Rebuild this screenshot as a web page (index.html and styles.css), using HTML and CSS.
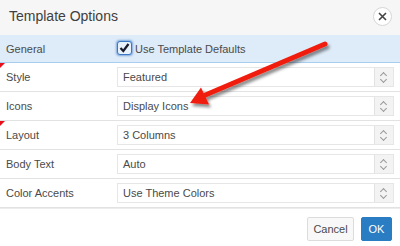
FILE: index.html
```html
<!DOCTYPE html>
<html lang="en">
<head>
    <meta charset="UTF-8">
    <title>Template Options</title>
    <link rel="stylesheet" href="styles.css">
</head>
<body>
    <div class="dialog">
        <div class="dialog-header">
            <h2>Template Options</h2>
            <span class="close-btn">
                <svg width="9" height="9" viewBox="0 0 9 9"><path d="M1 1L8 8M8 1L1 8" stroke="#444" stroke-width="1.6"/></svg>
            </span>
        </div>

        <div class="row general">
            <div class="row-label">General</div>
            <label class="check">
                <span class="check-box">
                    <svg width="11" height="10" viewBox="0 0 11 10"><path d="M1.5 5L4.3 8L9.5 1" fill="none" stroke="#1a1a2a" stroke-width="2.2"/></svg>
                </span>
                Use Template Defaults
            </label>
        </div>
        <div class="row changed">
            <div class="row-label">Style</div>
            <div class="select"><span>Featured</span><span class="spin"></span></div>
        </div>
        <div class="row">
            <div class="row-label">Icons</div>
            <div class="select"><span>Display Icons</span><span class="spin"></span></div>
        </div>
        <div class="row changed">
            <div class="row-label">Layout</div>
            <div class="select"><span>3 Columns</span><span class="spin"></span></div>
        </div>
        <div class="row">
            <div class="row-label">Body Text</div>
            <div class="select"><span>Auto</span><span class="spin"></span></div>
        </div>
        <div class="row">
            <div class="row-label">Color Accents</div>
            <div class="select"><span>Use Theme Colors</span><span class="spin"></span></div>
        </div>

        <div class="dialog-footer">
            <button class="btn btn-cancel">Cancel</button>
            <button class="btn btn-primary">OK</button>
        </div>

        <!-- annotation arrow -->
        <svg class="arrow" width="400" height="246" viewBox="0 0 400 246">
            <defs>
                <filter id="shadow" x="-20%" y="-20%" width="140%" height="160%">
                    <feDropShadow dx="2" dy="3" stdDeviation="1.6" flood-color="#000" flood-opacity="0.45"/>
                </filter>
            </defs>
            <g filter="url(#shadow)" fill="#f01c0c">
                <path d="M325 44L203 96" stroke="#f01c0c" stroke-width="5" stroke-linecap="round"/>
                <polygon points="190,103 209,104.5 201,87.5"/>
            </g>
        </svg>
    </div>
</body>
</html>
```

FILE: styles.css
```css
body {
    margin: 0;
    font-family: 'Liberation Sans', Arial, sans-serif;
    color: #4a4a4a;
    background: #fff;
}
.dialog {
    position: relative;
    width: 400px;
    height: 246px;
    overflow: hidden;
}
.dialog-header {
    height: 35px;
    display: flex;
    align-items: center;
    justify-content: space-between;
    padding: 0 8px 0 9px;
    background: #f6f6f6;
}
.dialog-header h2 {
    margin: 0;
    font-size: 14px;
    font-weight: normal;
    color: #404040;
    padding-bottom: 3px;
}
.close-btn {
    width: 19px;
    height: 19px;
    box-sizing: border-box;
    border: 1px solid #d6d6d6;
    border-radius: 50%;
    background: #fff;
    display: flex;
    align-items: center;
    justify-content: center;
    margin-bottom: 3px;
}
.row {
    position: relative;
    display: grid;
    grid-template-columns: 117px 1fr;
    align-items: center;
    height: 28px;
    border-bottom: 1px solid #e2e2e2;
    padding-right: 6px;
    font-size: 11px;
}
.row-label {
    padding-left: 6px;
}
.row.changed::before {
    content: '';
    position: absolute;
    left: 0;
    top: 0;
    border-top: 5px solid #e8101a;
    border-right: 5px solid transparent;
}
.general {
    height: 27px;
    background: #deebf8;
    border-bottom: 1px solid #a8cdf0;
}
.check {
    display: flex;
    align-items: center;
    gap: 3px;
}
.check-box {
    width: 13px;
    height: 12px;
    border: 1px solid #3a78c2;
    border-radius: 3px;
    background: #e8f2fc;
    box-shadow: 0 0 2px 1px rgba(60, 120, 200, 0.6);
    display: flex;
    align-items: center;
    justify-content: center;
    margin-bottom: 1px;
}
.select {
    display: flex;
    align-items: center;
    justify-content: space-between;
    height: 20px;
    border: 1px solid #e6e6e6;
    box-sizing: border-box;
    padding-left: 5px;
    background: #fff;
}
.spin {
    width: 18px;
    height: 18px;
    border-left: 1px solid #e2e2e2;
    background: #f3f3f3;
    position: relative;
}
.spin::before,
.spin::after {
    content: '';
    position: absolute;
    left: 6px;
    width: 4px;
    height: 4px;
    border-left: 1px solid #999;
    border-top: 1px solid #999;
}
.spin::before {
    top: 5px;
    transform: rotate(45deg);
}
.spin::after {
    top: 9px;
    transform: rotate(225deg);
}
.dialog-footer {
    border-top: 1px solid #ececec;
    display: flex;
    justify-content: flex-end;
    gap: 7px;
    padding: 8px 8px 0 0;
}
.btn {
    height: 24px;
    padding: 0;
    border: 1px solid #dcdcdc;
    border-radius: 2px;
    background: #f8f8f8;
    color: #4a4a4a;
    font-family: 'Liberation Sans', Arial, sans-serif;
    font-size: 11px;
}
.btn-cancel {
    width: 47px;
}
.btn-primary {
    width: 31px;
    background: #2a7cc3;
    border-color: #2a7cc3;
    color: #fff;
}
.arrow {
    position: absolute;
    left: 0;
    top: 0;
    pointer-events: none;
}
```
